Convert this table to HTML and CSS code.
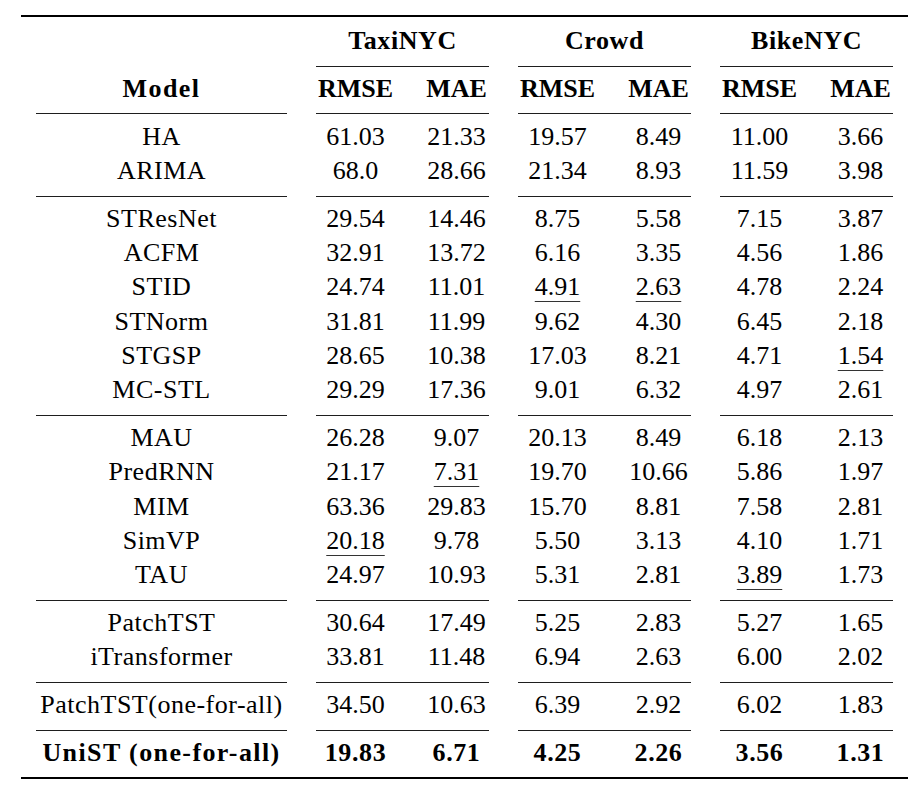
FILE: index.html
```html
<!DOCTYPE html>
<html lang="en">
<head>
<meta charset="utf-8">
<title>Results table</title>
<link rel="stylesheet" href="styles.css">
</head>
<body>
<div class="tbl">
  <div class="blank"></div>
  <div class="grp">TaxiNYC</div>
  <div class="grp">Crowd</div>
  <div class="grp">BikeNYC</div>

  <div class="blank"></div>
  <div class="rule g"></div>
  <div class="rule g"></div>
  <div class="rule g"></div>

  <div class="hd name">Model</div>
  <div class="hd">RMSE</div><div class="hd">MAE</div>
  <div class="hd">RMSE</div><div class="hd">MAE</div>
  <div class="hd">RMSE</div><div class="hd">MAE</div>

  <div class="rule"></div><div class="rule g"></div><div class="rule g"></div><div class="rule g"></div>

  <div class="name">HA</div><div>61.03</div><div>21.33</div><div>19.57</div><div>8.49</div><div>11.00</div><div>3.66</div>
  <div class="name">ARIMA</div><div>68.0</div><div>28.66</div><div>21.34</div><div>8.93</div><div>11.59</div><div>3.98</div>

  <div class="rule"></div><div class="rule g"></div><div class="rule g"></div><div class="rule g"></div>

  <div class="name">STResNet</div><div>29.54</div><div>14.46</div><div>8.75</div><div>5.58</div><div>7.15</div><div>3.87</div>
  <div class="name">ACFM</div><div>32.91</div><div>13.72</div><div>6.16</div><div>3.35</div><div>4.56</div><div>1.86</div>
  <div class="name">STID</div><div>24.74</div><div>11.01</div><div><span class="u">4.91</span></div><div><span class="u">2.63</span></div><div>4.78</div><div>2.24</div>
  <div class="name">STNorm</div><div>31.81</div><div>11.99</div><div>9.62</div><div>4.30</div><div>6.45</div><div>2.18</div>
  <div class="name">STGSP</div><div>28.65</div><div>10.38</div><div>17.03</div><div>8.21</div><div>4.71</div><div><span class="u">1.54</span></div>
  <div class="name">MC-STL</div><div>29.29</div><div>17.36</div><div>9.01</div><div>6.32</div><div>4.97</div><div>2.61</div>

  <div class="rule"></div><div class="rule g"></div><div class="rule g"></div><div class="rule g"></div>

  <div class="name">MAU</div><div>26.28</div><div>9.07</div><div>20.13</div><div>8.49</div><div>6.18</div><div>2.13</div>
  <div class="name">PredRNN</div><div>21.17</div><div><span class="u">7.31</span></div><div>19.70</div><div>10.66</div><div>5.86</div><div>1.97</div>
  <div class="name">MIM</div><div>63.36</div><div>29.83</div><div>15.70</div><div>8.81</div><div>7.58</div><div>2.81</div>
  <div class="name">SimVP</div><div><span class="u">20.18</span></div><div>9.78</div><div>5.50</div><div>3.13</div><div>4.10</div><div>1.71</div>
  <div class="name">TAU</div><div>24.97</div><div>10.93</div><div>5.31</div><div>2.81</div><div><span class="u">3.89</span></div><div>1.73</div>

  <div class="rule"></div><div class="rule g"></div><div class="rule g"></div><div class="rule g"></div>

  <div class="name">PatchTST</div><div>30.64</div><div>17.49</div><div>5.25</div><div>2.83</div><div>5.27</div><div>1.65</div>
  <div class="name">iTransformer</div><div>33.81</div><div>11.48</div><div>6.94</div><div>2.63</div><div>6.00</div><div>2.02</div>

  <div class="rule"></div><div class="rule g"></div><div class="rule g"></div><div class="rule g"></div>

  <div class="name">PatchTST(one-for-all)</div><div>34.50</div><div>10.63</div><div>6.39</div><div>2.92</div><div>6.02</div><div>1.83</div>

  <div class="rule"></div><div class="rule g"></div><div class="rule g"></div><div class="rule g"></div>

  <div class="b name">UniST (one-for-all)</div><div class="b">19.83</div><div class="b">6.71</div><div class="b">4.25</div><div class="b">2.26</div><div class="b">3.56</div><div class="b">1.31</div>
</div>
</body>
</html>
```

FILE: styles.css
```css
html, body {
  margin: 0;
  padding: 0;
  background: #ffffff;
}

body {
  font-family: "Liberation Serif", "Times New Roman", serif;
  color: #000000;
}

.tbl {
  box-sizing: border-box;
  width: 887px;
  margin: 15px 0 0 21px;
  padding: 7.2px 15px 6.3px;
  border-top: 2px solid #000;
  border-bottom: 2px solid #000;
  display: grid;
  grid-template-columns: 251px 79px 65px 79px 65px 79px 65px;
  column-gap: 29px;
  font-size: 26px;
  line-height: 34.3px;
  text-align: center;
  white-space: nowrap;
}

.grp {
  grid-column: span 2;
  font-weight: bold;
  letter-spacing: 0.6px;
}

.hd {
  font-weight: bold;
}

.name {
  letter-spacing: 0.5px;
}

.hd.name,
.b.name {
  letter-spacing: 1.4px;
}

.b {
  font-weight: bold;
  letter-spacing: 0.6px;
}

.rule {
  height: 1px;
  margin: 7.2px 0 5.3px;
  background: #1e1e1e;
}

.rule.g {
  grid-column: span 2;
}

.u {
  text-decoration: underline;
  text-decoration-thickness: 1px;
  text-underline-offset: 6px;
  text-decoration-color: #333;
}
```
